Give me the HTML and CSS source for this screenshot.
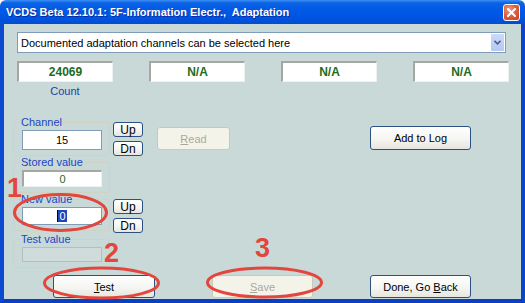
FILE: index.html
```html
<!DOCTYPE html>
<html lang="en">
<head>
	<meta charset="UTF-8">
	<meta name="viewport" content="width=device-width, initial-scale=1.0">
	<title>VCDS Adaptation</title>
	<link rel="stylesheet" href="styles.css">
</head>

<body>
<div class="window">
	<div class="titlebar">
		<span class="title">VCDS Beta 12.10.1: 5F-Information Electr.,&nbsp; Adaptation</span>
		<span class="close">
			<svg width="9" height="9" viewBox="0 0 9 9"><path d="M1 1 L8 8 M8 1 L1 8" stroke="#fff" stroke-width="2" stroke-linecap="square"/></svg>
		</span>
	</div>

	<div class="frame">
		<div class="client">
			<div class="combo">
				<span class="combo-text">Documented adaptation channels can be selected here</span>
				<span class="combo-arrow">
					<svg width="7" height="5" viewBox="0 0 7 5"><path d="M0.5 0.8 L3.5 3.8 L6.5 0.8" fill="none" stroke="#4d6185" stroke-width="1.6"/></svg>
				</span>
			</div>

			<div class="readouts">
				<div class="readout-item">
					<div class="readout">24069</div>
					<div class="readout-label">Count</div>
				</div>
				<div class="readout-item">
					<div class="readout">N/A</div>
				</div>
				<div class="readout-item">
					<div class="readout">N/A</div>
				</div>
				<div class="readout-item">
					<div class="readout">N/A</div>
				</div>
			</div>

			<div class="main">
				<div class="groups">
					<div class="group-row">
						<fieldset class="group">
							<legend>Channel</legend>
							<div class="edit edit-channel">15</div>
						</fieldset>
						<div class="spin">
							<button class="btn spin-btn">Up</button>
							<button class="btn spin-btn">Dn</button>
						</div>
					</div>

					<div class="group-row">
						<fieldset class="group">
							<legend>Stored value</legend>
							<div class="edit edit-stored">0</div>
						</fieldset>
					</div>

					<div class="group-row">
						<fieldset class="group">
							<legend>New value</legend>
							<div class="edit edit-new"><span class="selected">0</span></div>
						</fieldset>
						<div class="spin">
							<button class="btn spin-btn">Up</button>
							<button class="btn spin-btn">Dn</button>
						</div>
					</div>

					<div class="group-row">
						<fieldset class="group">
							<legend>Test value</legend>
							<div class="edit edit-test"></div>
						</fieldset>
					</div>
				</div>

				<button class="btn btn-read" disabled><u>R</u>ead</button>
				<button class="btn btn-log">Add to Log</button>
			</div>

			<div class="actions">
				<button class="btn btn-test"><u>T</u>est</button>
				<button class="btn btn-save" disabled><u>S</u>ave</button>
				<button class="btn btn-done">Done, Go <u>B</u>ack</button>
			</div>
		</div>
	</div>

	<!-- red markings drawn over the dialog -->
	<svg class="marks" width="525" height="303" viewBox="0 0 525 303">
		<ellipse cx="60.5" cy="212.5" rx="46" ry="18" fill="none" stroke="#e2463c" stroke-width="3"/>
		<ellipse cx="101.5" cy="283" rx="57" ry="15" fill="none" stroke="#e2463c" stroke-width="3"/>
		<ellipse cx="264.5" cy="282.5" rx="57" ry="14.5" fill="none" stroke="#e2463c" stroke-width="3"/>
		<text class="mark-num" x="7" y="197">1</text>
		<text class="mark-num" x="104" y="262">2</text>
		<text class="mark-num" x="255" y="257">3</text>
	</svg>
</div>
</body>
</html>
```

FILE: styles.css
```css
html {
	font-family: "Liberation Sans", Arial, sans-serif;
	font-size: 11px;
}
body {
	margin: 0;
	background: #fff;
}
.window {
	position: relative;
	width: 525px;
	height: 303px;
	overflow: hidden;
}

/* title bar */
.titlebar {
	height: 24px;
	display: flex;
	align-items: center;
	justify-content: space-between;
	padding: 0 5px 0 6px;
	box-sizing: border-box;
	background: linear-gradient(to bottom, #3d8ef5 0, #0a62e4 3px, #0058e6 45%, #0054e3 75%, #0050d8 90%, #0a49ca 100%);
	border-radius: 6px 6px 0 0;
}
.title {
	color: #fff;
	font-weight: bold;
	font-size: 11px;
	text-shadow: 1px 1px 0 #0b2b9c;
	white-space: nowrap;
}
.close {
	width: 17px;
	height: 17px;
	box-sizing: border-box;
	border: 1px solid #fff;
	border-radius: 3px;
	background: radial-gradient(circle at 35% 30%, #f09a80 0, #e0603d 45%, #c8401e 100%);
	display: flex;
	align-items: center;
	justify-content: center;
}

/* window frame */
.frame {
	height: 279px;
	border-left: 4px solid #0a4bd2;
	border-right: 4px solid #0a45c8;
	border-bottom: 4px solid #0a40c0;
	box-sizing: border-box;
}
.client {
	height: 275px;
	background: #c9d9d8;
	padding-top: 8px;
	box-sizing: border-box;
}

/* combo box */
.combo {
	margin-left: 13px;
	width: 489px;
	height: 21px;
	box-sizing: border-box;
	border: 1px solid #7f9db9;
	background: #fff;
	display: flex;
	align-items: center;
	justify-content: space-between;
	padding: 0 1px 0 3px;
}
.combo-text {
	color: #000;
}
.combo-arrow {
	width: 13px;
	height: 17px;
	background: linear-gradient(to bottom, #cbdaf9, #b4c8f6);
	border-radius: 1px;
	display: flex;
	align-items: center;
	justify-content: center;
}

/* readouts */
.readouts {
	display: grid;
	grid-template-columns: repeat(4, 96px);
	column-gap: 36px;
	margin: 8px 0 0 13px;
}
.readout {
	height: 21px;
	box-sizing: border-box;
	background: #fff;
	border-style: solid;
	border-width: 2px 1px 1px 2px;
	border-color: #a6a7a3 #eef1f0 #eef1f0 #a6a7a3;
	color: #1d6b1d;
	font-weight: bold;
	font-size: 12px;
	text-align: center;
	line-height: 18px;
}
.readout-label {
	margin-top: 2px;
	line-height: 14px;
	text-align: center;
	color: #2340a6;
}

/* main area */
.main {
	display: flex;
	align-items: flex-start;
	margin-top: 18px;
}
.groups {
	margin-left: 9px;
}
.group-row {
	display: flex;
	align-items: flex-start;
}
.group {
	width: 97px;
	box-sizing: border-box;
	margin: 0;
	min-width: 0;
	padding: 2px 6px 5px 8px;
	border: 1px solid #d2d2c2;
	border-radius: 3px;
}
.group legend {
	padding: 0 1px;
	margin-left: -2px;
	line-height: 12px;
	color: #2046c4;
}
.edit {
	width: 80px;
	box-sizing: border-box;
	background: #fff;
	text-align: center;
	color: #000;
}
.edit-channel {
	height: 20px;
	line-height: 18px;
	border: 1px solid #7f9db9;
}
.edit-stored {
	height: 17px;
	line-height: 15px;
	border-style: solid;
	border-width: 2px 1px 1px 2px;
	border-color: #a6a7a3 #eef1f0 #eef1f0 #a6a7a3;
	color: #1d6b1d;
	line-height: 14px;
}
.edit-new {
	height: 18px;
	line-height: 16px;
	border: 1px solid #7f9db9;
}
.selected {
	background: #1f45b8;
	color: #fff;
	padding: 0 1px;
	border-left: 1px solid #000;
}
.edit-test {
	height: 15px;
	background: #cfdcdb;
	border: 1px solid #b4c0c0;
}

.spin {
	display: flex;
	flex-direction: column;
	gap: 4px;
	margin: 6px 0 0 3px;
}

/* buttons */
.btn {
	font-family: inherit;
	font-size: 11px;
	padding: 0;
	color: #000;
	border: 1px solid #2c5082;
	border-radius: 3px;
	background: linear-gradient(to bottom, #ffffff 0, #f4f4f0 60%, #e6e5de 100%);
	box-sizing: border-box;
}
.btn:disabled {
	color: #aca899;
	border-color: #cac8bb;
	background: #f4f3ea;
}
.spin-btn {
	width: 30px;
	height: 15px;
	font-size: 12px;
	line-height: 12px;
}
.btn-read {
	width: 73px;
	height: 23px;
	margin: 11px 0 0 14px;
}
.btn-log {
	width: 101px;
	height: 24px;
	margin: 10px 0 0 140px;
}

.actions {
	display: flex;
	gap: 57px;
	margin: 7px 0 0 49px;
}
.btn-test,
.btn-save,
.btn-done {
	width: 101px;
	height: 23px;
}
.btn-test {
	width: 102px;
}

/* overlay */
.marks {
	position: absolute;
	left: 0;
	top: 0;
	pointer-events: none;
}
.mark-num {
	font-family: "Liberation Sans", Arial, sans-serif;
	font-weight: bold;
	font-size: 27px;
	fill: #e2463c;
}
```
